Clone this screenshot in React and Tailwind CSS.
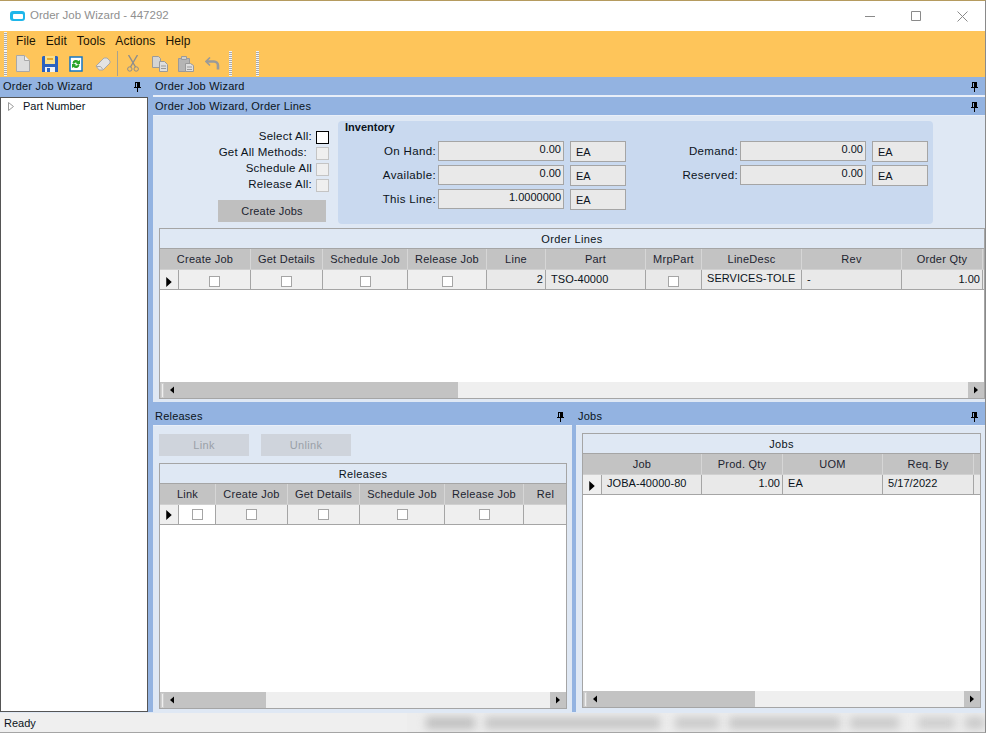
import React from "react";

const Pin = () => (
  <svg width="9" height="11" viewBox="0 0 9 11" className="shrink-0">
    <path d="M2 1h5v5h1v1H1V6h1zM3 2v4h1V2zM4 7h1v4H4z" fill="#000" fillRule="evenodd" />
  </svg>
);

const Header = ({ title, pin, className = "" }) => (
  <div className={"flex items-center justify-between bg-[#93b3e1] pl-[2px] pr-[6px] text-[#0b1320] tracking-[0.22px] " + className}>
    <span>{title}</span>
    {pin && <Pin />}
  </div>
);

const Check = ({ disabled, dark, small, className = "" }) => (
  <div
    className={
      (small ? "w-[11px] h-[11px] " : "w-[13px] h-[13px] ") +
      "border shrink-0 " +
      (dark ? "border-black bg-white " : disabled ? "border-[#c4c4c4] bg-[#efefef] " : "border-[#a5a5a5] bg-white ") +
      className
    }
  />
);

const Arrow = ({ dir = "right", w = 5, h = 9 }) => (
  <svg width={w} height={h} viewBox="0 0 5 9">
    <path d={dir === "right" ? "M0 0l5 4.5L0 9z" : "M5 0L0 4.5 5 9z"} fill="#000" />
  </svg>
);

const Field = ({ value, align = "right", className = "" }) => (
  <div
    className={
      "border border-[#a5a5a5] bg-[#e9e9e9] flex items-center text-[#0b1320] tracking-normal " +
      (align === "right" ? "justify-end pr-[2px] pb-[3px] w-[126px] h-[20px] " : "justify-start pl-[5px] pt-[1px] w-[56px] h-[21px] ") +
      className
    }
  >
    {value}
  </div>
);

// one line of the inventory box: label, number and uom
const InvRow = ({ label, value }) => (
  <div className="flex items-start h-[21px]">
    <div className="w-[100px] text-right pr-[2px] text-[#0b1320] text-[11.5px] leading-[20px]">{label}</div>
    <Field value={value} />
    <Field value="EA" align="left" className="ml-[6px]" />
  </div>
);

const Scrollbar = ({ thumb }) => (
  <div className="h-[17px] flex bg-[#efefef] border-b border-[#a5a5a5] shrink-0">
    <div className="flex items-center bg-[#c3c3c3] pl-[1px]" style={{ width: thumb }}>
      <div className="w-[3px] h-[15px] bg-[#efefef] border border-[#cfcfcf] mr-[6px]" />
      <Arrow dir="left" w={4} h={8} />
    </div>
    <div className="flex-1" />
    <div className="w-[16px] bg-[#c3c3c3] flex items-center justify-center">
      <Arrow w={4} h={8} />
    </div>
  </div>
);

const cols = (list) => list.map((c) => c + "px").join(" ");

const Grid = ({ title, widths, heads, cells, thumb, className = "" }) => (
  <div className={"flex flex-col border border-[#a5a5a5] border-b-0 bg-white " + className}>
    <div className="h-[20px] pt-[1px] bg-[#dfe8f4] border-b border-[#a5a5a5] flex items-center justify-center text-[#0b1320] shrink-0">{title}</div>
    <div className="grid h-[20px] bg-[#c3c3c3] shrink-0 overflow-hidden tracking-[0.25px]" style={{ gridTemplateColumns: cols(widths) }}>
      {heads.map((h, i) => (
        <div
          key={i}
          className="flex items-center justify-center border-r border-[#d6d6d6] whitespace-nowrap text-[#1d2430]"
          style={h.span ? { gridColumn: "span " + h.span } : undefined}
        >
          {h.text}
        </div>
      ))}
    </div>
    <div className="grid h-[21px] bg-[#e9e9e9] border-y border-[#a5a5a5] border-t-[#d0d0d0] shrink-0 overflow-hidden" style={{ gridTemplateColumns: cols(widths) }}>
      {cells}
    </div>
    <div className="flex-1" />
    <Scrollbar thumb={thumb} />
  </div>
);

const Cell = ({ children, className = "" }) => (
  <div className={"flex items-center border-r border-[#a5a5a5] px-[5px] pb-[5px] whitespace-nowrap text-[#0b1320] tracking-[0.05px] " + className}>
    {children}
  </div>
);

const CheckCell = ({ light, white }) => (
  <Cell className={"justify-center !pb-0 " + (white ? "bg-white" : light ? "bg-[#efefef]" : "")}>
    <Check small />
  </Cell>
);

const Selector = () => (
  <Cell className="justify-center bg-[#efefef] !px-0 !pb-0">
    <Arrow w={6} h={10} />
  </Cell>
);

const Tool = ({ children }) => (
  <div className="w-[26.5px] flex items-center justify-center">{children}</div>
);

const Grip = ({ className = "" }) => (
  <div className={"w-[3px] bg-[repeating-linear-gradient(to_bottom,#f4f4f4_0,#f4f4f4_1px,#a9a9a9_1px,#a9a9a9_2px)] " + className} />
);

const Toolbar = () => (
  <div className="flex h-[27px] items-center pl-[10px]">
    <Tool>
      <svg width="14" height="17" viewBox="0 0 14 17"><path d="M.5.5h8l5 5v11H.5z" fill="#dcdcdc" stroke="#a8a8a8" /><path d="M8.5.5v5h5" fill="#f2f2f2" stroke="#a8a8a8" /></svg>
    </Tool>
    <Tool>
      <svg width="16" height="16" viewBox="0 0 16 16">
        <path d="M0 1l1-1h14l1 1v15H0z" fill="#2a62c0" />
        <path d="M3 0h10v8H3z" fill="#fbe08a" />
        <path d="M5 2h6v2H5z" fill="#e8a92a" />
        <path d="M3 11h10v5H3z" fill="#eef2f8" />
        <path d="M5 12h3v4H5z" fill="#2a62c0" />
      </svg>
    </Tool>
    <Tool>
      <svg width="14" height="16" viewBox="0 0 14 16">
        <path d="M1 1h12v14H1z" fill="#fff" stroke="#1576c4" strokeWidth="1.5" />
        <path d="M3.5 7a3.5 3.5 0 0 1 6-2l1.5-1v4H7l1-1a2 2 0 0 0-3 1z" fill="#2aa52a" />
        <path d="M10.5 9a3.5 3.5 0 0 1-6 2L3 12V8h4L6 9a2 2 0 0 0 3-1z" fill="#2aa52a" />
      </svg>
    </Tool>
    <Tool>
      <svg width="16" height="14" viewBox="0 0 16 14"><path d="M1 9l8-8h3l3 3v2l-7 7H4z" fill="#e3e3e3" stroke="#a8a8a8" /><path d="M1.5 9.5h4l2.5 3" fill="none" stroke="#a8a8a8" /></svg>
    </Tool>
    <div className="w-px h-[25px] bg-[#a7a28f] ml-[1px] mr-[2px]" />
    <Tool>
      <svg width="12" height="17" viewBox="0 0 12 17" fill="none" stroke="#8d8d8d"><path d="M1.5 0l7 12M10.5 0l-7 12" strokeWidth="1.4" /><circle cx="2.8" cy="14" r="2.2" /><circle cx="9.2" cy="14" r="2.2" /></svg>
    </Tool>
    <Tool>
      <svg width="16" height="16" viewBox="0 0 16 16"><path d="M.5.5h6l2 2v9H.5z" fill="#d4d4d4" stroke="#9a9a9a" /><path d="M7.5 5.5h5l3 3v7h-8z" fill="#dedede" stroke="#9a9a9a" /><path d="M9 10h5M9 12.5h5" stroke="#9a9a9a" /></svg>
    </Tool>
    <Tool>
      <svg width="16" height="16" viewBox="0 0 16 16"><path d="M.5 2.5h11v13H.5z" fill="#b5b5b5" stroke="#9a9a9a" /><path d="M3.5.5h5v3h-5z" fill="#cfcfcf" stroke="#9a9a9a" /><path d="M7.5 7.5h5l3 2v6h-8z" fill="#dedede" stroke="#9a9a9a" /><path d="M9 11h5M9 13.5h5" stroke="#9a9a9a" /></svg>
    </Tool>
    <Tool>
      <svg width="15" height="13" viewBox="0 0 15 13" fill="none"><path d="M5 .5L1 4.5l4 4" stroke="#9a9a9a" strokeWidth="1.6" /><path d="M2 4.5h7a4 4 0 0 1 4 4v4" stroke="#9a9a9a" strokeWidth="2.6" /></svg>
    </Tool>
    <Grip className="h-[25px] ml-[3px]" />
    <Grip className="h-[25px] ml-[24px]" />
  </div>
);

const App = () => {
  return (
    <div className="w-[986px] h-[733px] overflow-hidden bg-[#efefef] flex flex-col text-[11px] tracking-[0.35px] font-['Liberation_Sans',Arial,sans-serif] border-t border-r border-b border-t-[#b59b5f] border-r-[#8a8a8a] border-b-[#a5a5a5]">
      {/* title bar */}
      <div className="h-[30px] bg-white flex items-center shrink-0">
        <div className="w-[15px] h-[10px] rounded-[3px] bg-[#1fb6ea] ml-[10px] flex items-center justify-center">
          <div className="w-[10px] h-[5px] rounded-[1px] bg-white" />
        </div>
        <span className="ml-[5px] text-[11.5px] text-[#8f8f8f] tracking-normal">Order Job Wizard - 447292</span>
        <div className="ml-auto flex items-center pr-[17px]">
          <svg width="10" height="10" viewBox="0 0 10 10"><path d="M0 5.5h10" stroke="#8a8a8a" /></svg>
          <svg width="10" height="10" viewBox="0 0 10 10" className="ml-[36px]"><path d="M.5.5h9v9h-9z" fill="none" stroke="#8a8a8a" /></svg>
          <svg width="11" height="11" viewBox="0 0 11 11" className="ml-[36px]"><path d="M.5.5l10 10M10.5.5l-10 10" stroke="#8a8a8a" /></svg>
        </div>
      </div>

      {/* menu + toolbar */}
      <div className="h-[46px] bg-[#fec55a] shrink-0 relative">
        <Grip className="absolute left-[4px] top-[1px] h-[19px]" />
        <Grip className="absolute left-[4px] top-[20px] h-[25px]" />
        <div className="h-[19px] flex items-center pl-[16px] gap-[10px] text-[12px] tracking-[0.1px] text-[#1b1405]">
          <span>File</span>
          <span>Edit</span>
          <span>Tools</span>
          <span>Actions</span>
          <span>Help</span>
        </div>
        <Toolbar />
      </div>

      {/* main */}
      <div className="flex-1 flex bg-[#93b3e1] min-h-0">
        <div className="w-[148px] flex flex-col shrink-0">
          <Header title="Order Job Wizard" pin className="h-[19px] !pl-[3px]" />
          <div className="flex-1 bg-white border border-[#555] flex items-start mt-px">
            <div className="flex items-center h-[17px] pl-[7px]">
              <svg width="6" height="9" viewBox="0 0 6 9"><path d="M.5.5l5 4-5 4z" fill="#fff" stroke="#9a9a9a" /></svg>
              <span className="ml-[9px] text-[#0b1320] tracking-normal">Part Number</span>
            </div>
          </div>
        </div>

        <div className="w-[5px] shrink-0" />

        <div className="flex-1 flex flex-col min-w-0">
          <Header title="Order Job Wizard" pin className="h-[18px]" />
          <div className="h-[2px] bg-[#e9eff8]" />
          <Header title="Order Job Wizard, Order Lines" pin className="h-[18px]" />

          {/* order lines panel */}
          <div className="h-[287px] bg-[#dfe8f4] border-t border-[#e9eff8] px-[6px] pt-[5px] flex flex-col shrink-0">
            <div className="flex h-[103px] shrink-0">
              <div className="w-[173px] flex flex-col items-end pr-[3px] pt-[8px] text-[#0b1320] text-[11.5px] tracking-[0.25px] shrink-0">
                <div className="flex items-center justify-end h-[16px] gap-[4px]">Select All:<Check dark /></div>
                <div className="flex items-center justify-end h-[16px] gap-[4px]"><span className="mr-[5px]">Get All Methods:</span><Check disabled /></div>
                <div className="flex items-center justify-end h-[16px] gap-[4px]">Schedule All<Check disabled /></div>
                <div className="flex items-center justify-end h-[16px] gap-[4px]">Release All:<Check disabled /></div>
                <div className="w-[108px] h-[22px] mt-[7px] mr-[3px] bg-[#bfbfbf] flex items-center justify-center text-[#1d2430] text-[11px] tracking-[0.2px]">Create Jobs</div>
              </div>
              <div className="w-[595px] ml-[6px] h-[103px] rounded-[4px] bg-[#c9d9ef] pl-[7px] shrink-0">
                <div className="font-bold text-[#0b1320] tracking-normal leading-[12px]">Inventory</div>
                <div className="flex mt-[8px]">
                  <div className="flex flex-col gap-[3px] -ml-[7px]">
                    <InvRow label="On Hand:" value="0.00" />
                    <InvRow label="Available:" value="0.00" />
                    <InvRow label="This Line:" value="1.0000000" />
                  </div>
                  <div className="flex flex-col gap-[3px] ml-[14px]">
                    <InvRow label="Demand:" value="0.00" />
                    <InvRow label="Reserved:" value="0.00" />
                  </div>
                </div>
              </div>
            </div>
            <Grid
              title="Order Lines"
              className="h-[171px] mt-[4px] -mr-[6px] shrink-0"
              thumb={298}
              widths={[19, 72, 72, 85, 79, 59, 100, 56, 100, 100, 81, 100]}
              heads={[
                { text: "Create Job", span: 2 },
                { text: "Get Details" },
                { text: "Schedule Job" },
                { text: "Release Job" },
                { text: "Line" },
                { text: "Part" },
                { text: "MrpPart" },
                { text: "LineDesc" },
                { text: "Rev" },
                { text: "Order Qty" },
                { text: "" },
              ]}
              cells={
                <>
                  <Selector />
                  <CheckCell light />
                  <CheckCell light />
                  <CheckCell light />
                  <CheckCell light />
                  <Cell className="justify-end !pr-[2px]">2</Cell>
                  <Cell>TSO-40000</Cell>
                  <CheckCell />
                  <Cell className="!pb-[7px]">SERVICES-TOLE</Cell>
                  <Cell>-</Cell>
                  <Cell className="justify-end !pr-[2px]">1.00</Cell>
                </>
              }
            />
          </div>

          <div className="flex-1 flex min-h-0">
            {/* releases */}
            <div className="w-[419px] flex flex-col shrink-0">
              <Header title="Releases" pin className="h-[23px] pt-[5px] !pr-[7px]" />
              <div className="flex-1 bg-[#dfe8f4] px-[6px] pt-[8px] flex flex-col min-h-0 border-t border-[#e9eff8]">
                <div className="flex gap-[12px] shrink-0">
                  <div className="w-[90px] h-[22px] bg-[#cfd4dc] flex items-center justify-center text-[#9aa0a8]">Link</div>
                  <div className="w-[90px] h-[22px] bg-[#cfd4dc] flex items-center justify-center text-[#9aa0a8]">Unlink</div>
                </div>
                <Grid
                  title="Releases"
                  className="h-[246px] mt-[7px] -mr-[1px] shrink-0"
                  thumb={106}
                  widths={[19, 37, 72, 72, 85, 79, 44]}
                  heads={[
                    { text: "Link", span: 2 },
                    { text: "Create Job" },
                    { text: "Get Details" },
                    { text: "Schedule Job" },
                    { text: "Release Job" },
                    { text: "Rel" },
                  ]}
                  cells={
                    <>
                      <Selector />
                      <CheckCell white />
                      <CheckCell light />
                      <CheckCell light />
                      <CheckCell light />
                      <CheckCell light />
                      <Cell className="bg-[#efefef] border-r-0" />
                    </>
                  }
                />
              </div>
            </div>

            <div className="w-[4px] shrink-0" />

            {/* jobs */}
            <div className="flex-1 flex flex-col min-w-0">
              <Header title="Jobs" pin className="h-[23px] pt-[5px]" />
              <div className="flex-1 bg-[#dfe8f4] pl-[6px] pr-[4px] pt-[7px] pb-[4px] flex flex-col min-h-0 border-t border-[#e9eff8]">
                <Grid
                  title="Jobs"
                  className="flex-1 min-h-0"
                  thumb={172}
                  widths={[19, 100, 81, 100, 91, 8]}
                  heads={[
                    { text: "Job", span: 2 },
                    { text: "Prod. Qty" },
                    { text: "UOM" },
                    { text: "Req. By" },
                    { text: "" },
                  ]}
                  cells={
                    <>
                      <Selector />
                      <Cell>JOBA-40000-80</Cell>
                      <Cell className="justify-end !pr-[2px]">1.00</Cell>
                      <Cell>EA</Cell>
                      <Cell>5/17/2022</Cell>
                      <Cell className="border-r-0" />
                    </>
                  }
                />
              </div>
            </div>
          </div>
        </div>
      </div>

      {/* status bar, right part is blurred out in the picture */}
      <div className="h-[20px] bg-[#efefef] border-t border-[#dfe8f4] flex items-center pl-[4px] pt-[1px] shrink-0 overflow-hidden text-[#0b1320] tracking-normal relative">
        <span>Ready</span>
        <div className="absolute left-[407px] right-0 top-0 bottom-0 bg-[#ededed] flex items-center pl-[19px] gap-[10px] overflow-hidden">
          <div className="w-[49px] h-[12px] bg-[#c0c0c0] blur-[4px]" />
          <div className="w-[176px] h-[12px] bg-[#c6c6c6] blur-[4px]" />
          <div className="w-[44px] h-[12px] ml-[5px] bg-[#cacaca] blur-[4px]" />
          <div className="w-[112px] h-[12px] bg-[#c6c6c6] blur-[4px]" />
          <div className="w-[49px] h-[12px] bg-[#cacaca] blur-[4px]" />
          <div className="w-[37px] h-[12px] ml-[9px] bg-[#cecece] blur-[4px]" />
          <div className="w-[20px] h-[12px] bg-[#cacaca] blur-[4px]" />
        </div>
      </div>
    </div>
  );
};

export default App;
